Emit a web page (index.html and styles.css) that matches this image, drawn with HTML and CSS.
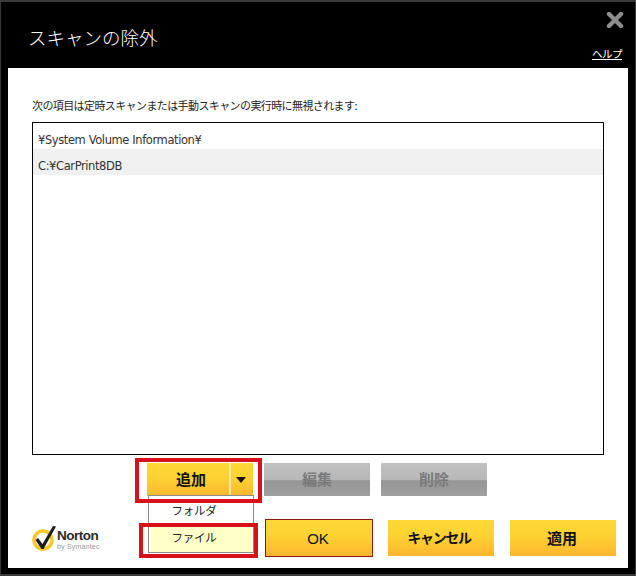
FILE: index.html
```html
<!DOCTYPE html>
<html lang="ja">
<head>
    <meta charset="UTF-8">
    <title>スキャンの除外</title>
    <link rel="stylesheet" href="styles.css">
</head>
<body>
    <div class="window">
        <header class="titlebar">
            <h1>スキャンの除外</h1>
            <div class="title-side">
                <svg class="close" width="18" height="16" viewBox="0 0 18 16">
                    <path d="M3 2 L15 14 M15 2 L3 14" stroke="#8e8e8e" stroke-width="4.4" stroke-linecap="round"/>
                </svg>
                <a class="help">ヘルプ</a>
            </div>
        </header>

        <main class="panel">
            <p class="intro">次の項目は定時スキャンまたは手動スキャンの実行時に無視されます:</p>

            <ul class="list">
                <li>¥System Volume Information¥</li>
                <li class="alt">C:¥CarPrint8DB</li>
            </ul>

            <div class="list-actions">
                <div class="add-wrap">
                    <div class="btn add">
                        <span class="add-label">追加</span>
                        <span class="add-arrow"></span>
                    </div>
                    <div class="menu">
                        <div class="menu-item">フォルダ</div>
                        <div class="menu-item selected">ファイル</div>
                    </div>
                    <div class="mark mark-add"></div>
                    <div class="mark mark-file"></div>
                </div>
                <div class="btn disabled">編集</div>
                <div class="btn disabled">削除</div>
            </div>

            <footer class="footer">
                <div class="logo">
                    <svg width="36" height="30" viewBox="0 0 36 30">
                        <circle cx="12" cy="18" r="9" fill="#fff" stroke="#f5c92a" stroke-width="3.6"/>
                        <path d="M7 16 L11.5 22 L22 4 L25 4.5 L12.5 27 L10.5 27 L4.5 18 Z" fill="#1c1c1c"/>
                    </svg>
                    <div class="logo-text">
                        <span class="logo-name">Norton</span>
                        <span class="logo-by">by Symantec</span>
                    </div>
                </div>
                <div class="footer-buttons">
                    <div class="btn main ok">OK</div>
                    <div class="btn main cancel">キャンセル</div>
                    <div class="btn main apply">適用</div>
                </div>
            </footer>
        </main>
    </div>
</body>
</html>
```

FILE: styles.css
```css
* {
    box-sizing: border-box;
    margin: 0;
    padding: 0;
}

html, body {
    width: 636px;
    height: 576px;
    overflow: hidden;
}

body {
    font-family: "DejaVu Sans", "Noto Sans CJK JP", sans-serif;
    font-size: 12px;
    color: #222;
    background: #000;
}

.window {
    width: 636px;
    height: 576px;
    display: flex;
    flex-direction: column;
    background: #000;
    border: 2px solid #3a3a3a;
    border-left-width: 1px;
    border-right-width: 1px;
}

.titlebar {
    height: 66px;
    display: flex;
    justify-content: space-between;
    color: #fff;
}

.titlebar h1 {
    font-family: "Noto Sans CJK JP", sans-serif;
    font-size: 18.5px;
    font-weight: 300;
    margin: 22px 0 0 27px;
}

.title-side {
    display: flex;
    flex-direction: column;
    align-items: flex-end;
    padding: 10px 13px 0 0;
}

.close {
    margin-right: -2px;
}

.help {
    margin-top: 19px;
    font-family: "Noto Sans CJK JP", sans-serif;
    font-size: 10.5px;
    line-height: 14px;
    letter-spacing: -0.5px;
    text-decoration: underline;
}

.panel {
    width: 620px;
    height: 500px;
    margin-left: 7px;
    padding: 0 24px;
    background: #fff;
    display: flex;
    flex-direction: column;
}

.intro {
    font-family: "Noto Sans CJK JP", sans-serif;
    font-size: 11px;
    letter-spacing: -0.6px;
    margin-top: 29px;
    line-height: 16px;
    height: 25px;
    white-space: nowrap;
}

.list {
    list-style: none;
    height: 333px;
    border: 1px solid #000;
}

.list li {
    height: 26px;
    padding: 6px 0 0 5px;
    line-height: 22px;
    font-size: 11.5px;
    letter-spacing: -0.4px;
    color: #333;
}

.list .alt {
    background: #f0f0f0;
}

.list-actions {
    display: flex;
    gap: 11px;
    margin-top: 8px;
    padding-left: 115px;
}

.add-wrap {
    position: relative;
    width: 106px;
}

.btn {
    height: 33px;
    width: 106px;
    padding-bottom: 2px;
    display: flex;
    align-items: center;
    justify-content: center;
    font-family: "Noto Sans CJK JP", sans-serif;
    font-size: 15px;
    font-weight: 700;
    background: linear-gradient(#fdd835 0%, #fdd232 45%, #fbb62e 100%);
    color: #111;
}

.add {
    justify-content: flex-start;
    padding-bottom: 0;
}

.add-label {
    width: 84px;
    height: 100%;
    padding-left: 6px;
    line-height: 31px;
    text-align: center;
    border-right: 2px solid #fde9a0;
}

.add-arrow {
    width: 0;
    height: 0;
    margin-left: 5px;
    border-left: 5px solid transparent;
    border-right: 5px solid transparent;
    border-top: 6px solid #1a1000;
}

.disabled {
    background: linear-gradient(#c0c0c0 0%, #b8b8b8 50%, #969696 54%, #a0a0a0 100%);
    color: #7a7a7a;
}

.menu {
    position: absolute;
    top: 32px;
    left: 1px;
    width: 106px;
    height: 58px;
    padding: 0 1px;
    border: 1px solid #8a8a8a;
    background: #fff;
    font-family: "Noto Sans CJK JP", sans-serif;
}

.menu-item {
    height: 27px;
    padding: 1px 14px 0 0;
    line-height: 26px;
    font-size: 11.5px;
    letter-spacing: -0.3px;
    text-align: center;
}

.menu-item.selected {
    height: 29px;
    padding-top: 0;
    line-height: 29px;
    background: #ffffc8;
}

.mark {
    position: absolute;
    border: 4px solid #d8101c;
}

.mark-add {
    top: -5px;
    left: -12px;
    width: 127px;
    height: 45px;
}

.mark-file {
    top: 60px;
    left: -8px;
    width: 119px;
    height: 35px;
}

.footer {
    display: flex;
    justify-content: space-between;
    align-items: flex-start;
    margin: 23px -12px 0 0;
}

.logo {
    display: flex;
    margin-top: 3px;
    margin-left: -1px;
}

.logo-text {
    display: flex;
    flex-direction: column;
    margin-left: -10px;
    padding-top: 7px;
}

.logo-name {
    font-family: "Liberation Sans", sans-serif;
    font-size: 13.5px;
    font-weight: 700;
    line-height: 14px;
    letter-spacing: -0.5px;
    color: #2a2a2a;
}

.logo-by {
    font-family: "Liberation Sans", sans-serif;
    font-size: 7px;
    line-height: 8px;
    letter-spacing: 0.2px;
    color: #999;
}

.footer-buttons {
    display: flex;
    align-items: center;
    height: 38px;
    gap: 16px;
}

.main {
    height: 36px;
}

.ok {
    width: 108px;
    height: 38px;
    padding: 0 2px 0 0;
    font-weight: 400;
    font-family: "Liberation Sans", sans-serif;
    font-size: 15px;
    border: 1px solid #8a1a10;
    margin-right: -1px;
}

.cancel {
    padding: 0 4px 2px 0;
    font-size: 14px;
    letter-spacing: -1.4px;
}

.apply {
    padding-right: 2px;
}
```
